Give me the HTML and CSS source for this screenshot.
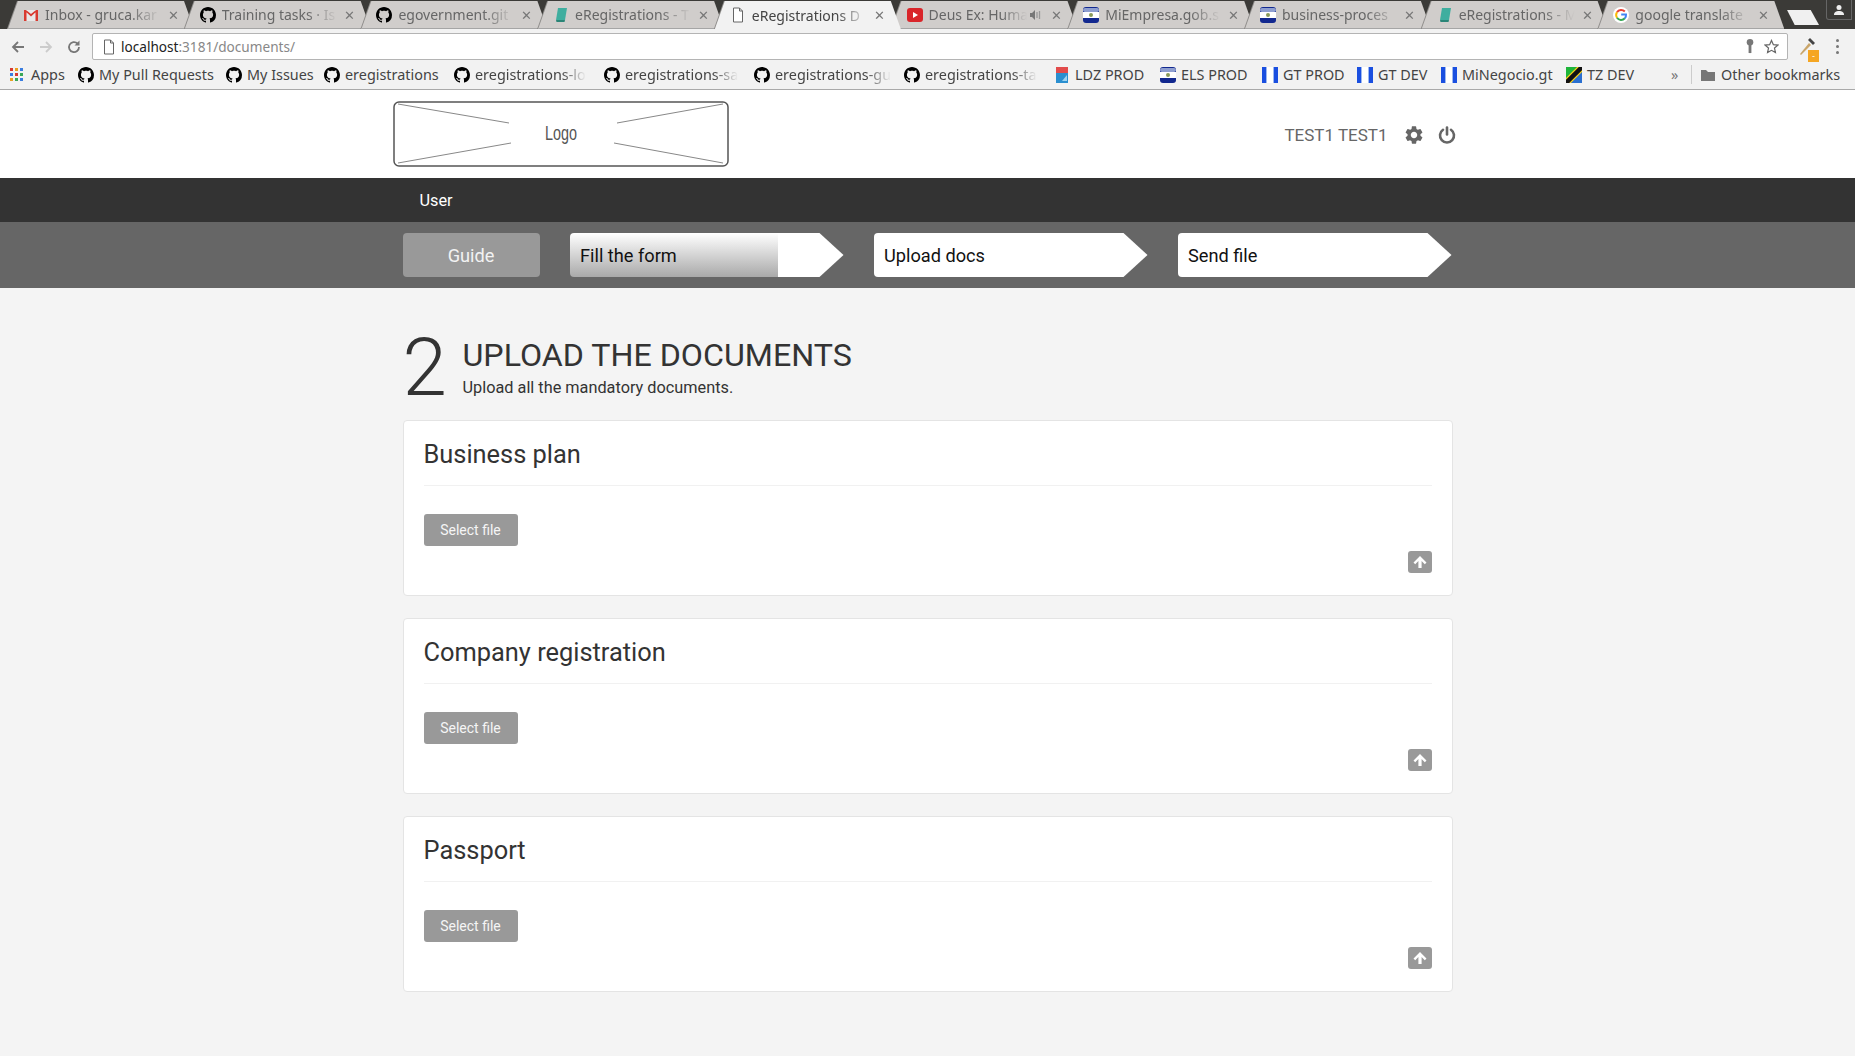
FILE: index.html
```html
<!DOCTYPE html>
<html lang="en-US">
<head>
    <meta charset="utf-8" />
    <title>eRegistrations Documents</title>
    <link rel="stylesheet" href="styles.css">
</head>
<body>

<svg class="defs" width="0" height="0">
    <symbol id="gh" viewBox="0 0 16 16"><path d="M8 0C3.58 0 0 3.58 0 8c0 3.54 2.29 6.53 5.47 7.59.4.07.55-.17.55-.38 0-.19-.01-.82-.01-1.49-2.01.37-2.53-.49-2.69-.94-.09-.23-.48-.94-.82-1.13-.28-.15-.68-.52-.01-.53.63-.01 1.08.58 1.23.82.72 1.21 1.87.87 2.33.66.07-.52.28-.87.51-1.07-1.78-.2-3.64-.89-3.64-3.95 0-.87.31-1.59.82-2.15-.08-.2-.36-1.02.08-2.12 0 0 .67-.21 2.2.82.64-.18 1.32-.27 2-.27.68 0 1.36.09 2 .27 1.53-1.04 2.2-.82 2.2-.82.44 1.1.16 1.92.08 2.12.51.56.82 1.27.82 2.15 0 3.07-1.87 3.75-3.65 3.95.29.25.54.73.54 1.48 0 1.07-.01 1.93-.01 2.2 0 .21.15.46.55.38A8.013 8.013 0 0016 8c0-4.42-3.58-8-8-8z"/></symbol>
    <symbol id="book" viewBox="0 0 16 16"><path fill="#3fae9f" d="M5 1h9l-2 12H3z"/><path fill="#2a8577" d="M3 13h9l-.5 2H3.5z"/></symbol>
    <symbol id="els" viewBox="0 0 16 16"><rect width="16" height="16" rx="3" fill="#12288f"/><rect y="1" width="16" height="4" rx="2" fill="#8f9fd0"/><rect y="5" width="16" height="6" fill="#fff"/><circle cx="8" cy="8" r="2" fill="#8a9a5b"/></symbol>
    <symbol id="gt" viewBox="0 0 16 16"><rect width="16" height="16" fill="#1a4fe0"/><rect x="4" width="8" height="16" fill="#9db8f0"/><rect x="5" width="6" height="16" fill="#fff"/></symbol>
    <symbol id="doc" viewBox="0 0 12 16"><path d="M1.5 1h6l3 3v11h-9z" fill="#fff" stroke="#666" stroke-width="1"/><path d="M7.5 1v3h3" fill="none" stroke="#666"/></symbol>
    <symbol id="up" viewBox="0 0 24 22"><rect width="24" height="22" rx="3" fill="#999"/><path d="M12 5l6.5 6.5-1.7 1.7-3.2-3.1V17h-3.2V10.100l-3.200 3.100-1.700-1.700z" fill="#fff"/></symbol>
</svg>

<div class="tabstrip">
    <div class="tab"><div class="tab-in">
        <svg class="favicon" viewBox="0 0 16 16"><path fill="#e8e8e8" d="M1 3h14v11H1z"/><path fill="#d93a30" d="M1 3h2.500v11H1zM12.500 3H15v11h-2.500zM1 3h2l5 4 5-4h2L8 9.500z"/></svg>
        <span class="tab-title">Inbox - gruca.kar</span><span class="tab-x">✕</span>
    </div></div>
    <div class="tab"><div class="tab-in">
        <svg class="favicon"><use href="#gh"/></svg>
        <span class="tab-title">Training tasks · Is</span><span class="tab-x">✕</span>
    </div></div>
    <div class="tab"><div class="tab-in">
        <svg class="favicon"><use href="#gh"/></svg>
        <span class="tab-title">egovernment.git</span><span class="tab-x">✕</span>
    </div></div>
    <div class="tab"><div class="tab-in">
        <svg class="favicon"><use href="#book"/></svg>
        <span class="tab-title">eRegistrations - T</span><span class="tab-x">✕</span>
    </div></div>
    <div class="tab active"><div class="tab-in">
        <svg class="favicon"><use href="#doc"/></svg>
        <span class="tab-title">eRegistrations D</span><span class="tab-x">✕</span>
    </div></div>
    <div class="tab"><div class="tab-in">
        <svg class="favicon" viewBox="0 0 16 16"><rect y="1" width="16" height="14" rx="3" fill="#d9252a"/><path d="M6 5l5 3-5 3z" fill="#fff"/></svg>
        <span class="tab-title short">Deus Ex: Huma</span>
        <svg class="speaker" viewBox="0 0 12 12"><path d="M1 4h2l3-3v10L3 8H1z" fill="#777"/><path d="M8 3v6M10.500 2v8" stroke="#999" stroke-width="1.300"/></svg>
        <span class="tab-x">✕</span>
    </div></div>
    <div class="tab"><div class="tab-in">
        <svg class="favicon"><use href="#els"/></svg>
        <span class="tab-title">MiEmpresa.gob.s</span><span class="tab-x">✕</span>
    </div></div>
    <div class="tab"><div class="tab-in">
        <svg class="favicon"><use href="#els"/></svg>
        <span class="tab-title">business-proces</span><span class="tab-x">✕</span>
    </div></div>
    <div class="tab"><div class="tab-in">
        <svg class="favicon"><use href="#book"/></svg>
        <span class="tab-title">eRegistrations - M</span><span class="tab-x">✕</span>
    </div></div>
    <div class="tab"><div class="tab-in">
        <svg class="favicon" viewBox="0 0 16 16"><circle cx="8" cy="8" r="8" fill="#fff"/><path d="M11.800 4.500A5 5 0 0 0 4 5.300" fill="none" stroke="#e94235" stroke-width="2"/><path d="M4 5.300a5 5 0 0 0 0 5.400" fill="none" stroke="#fbbc05" stroke-width="2"/><path d="M4 10.700a5 5 0 0 0 7.800.600" fill="none" stroke="#34a853" stroke-width="2"/><path d="M11.800 11.300A5 5 0 0 0 13 7.500H8.200" fill="none" stroke="#4285f4" stroke-width="2"/></svg>
        <span class="tab-title">google translate</span><span class="tab-x">✕</span>
    </div></div>
    <div class="new-tab"></div>
    <div class="profile">
        <svg viewBox="0 0 12 12" width="12" height="12"><circle cx="6" cy="3.500" r="2.500" fill="#eee"/><path d="M1 11c0-3 2-4 5-4s5 1 5 4z" fill="#eee"/></svg>
    </div>
</div>

<div class="toolbar">
    <svg class="nav-icon" viewBox="0 0 16 16"><path d="M14 8H3M8 3L3 8l5 5" fill="none" stroke="#777" stroke-width="1.800"/></svg>
    <svg class="nav-icon" viewBox="0 0 16 16"><path d="M2 8h11M8 3l5 5-5 5" fill="none" stroke="#ccc" stroke-width="1.800"/></svg>
    <svg class="nav-icon" viewBox="0 0 16 16"><path d="M13 8a5 5 0 1 1-1.500-3.500" fill="none" stroke="#777" stroke-width="1.800"/><path d="M13.500 1.500v5h-5z" fill="#777"/></svg>
    <div class="omnibox">
        <svg class="omni-doc"><use href="#doc"/></svg>
        <span class="url">localhost</span><span class="url-rest">:3181/documents/</span>
        <svg class="omni-key" viewBox="0 0 10 16"><circle cx="5" cy="3.500" r="3.500" fill="#777"/><path d="M3.500 5h3v10h-3z" fill="#777"/></svg>
        <svg class="omni-star" viewBox="0 0 16 16"><path d="M8 1.500l2 4.500 4.800.5-3.600 3.200 1 4.800L8 12.100l-4.200 2.400 1-4.800L1.200 6.500 6 6z" fill="none" stroke="#666" stroke-width="1.300"/></svg>
    </div>
    <div class="ext">
        <svg viewBox="0 0 18 18" width="18" height="18"><path d="M2 17L11 6l2 2-10 10z" fill="#c9a56a"/><path d="M10 3l2-2 5 5-2 2z" fill="#444"/></svg>
        <span class="ext-badge">-</span>
    </div>
    <div class="menu-dots"><i></i><i></i><i></i></div>
</div>

<div class="bookmarks">
    <div class="bm bm-apps">
        <svg class="bm-icon" viewBox="0 0 14 14">
            <rect x="0" y="0" width="3" height="3" fill="#d93a30"/><rect x="5" y="0" width="3" height="3" fill="#e8a020"/><rect x="10" y="0" width="3" height="3" fill="#3a7de0"/>
            <rect x="0" y="5" width="3" height="3" fill="#3a7de0"/><rect x="5" y="5" width="3" height="3" fill="#d93a30"/><rect x="10" y="5" width="3" height="3" fill="#3aa757"/>
            <rect x="0" y="10" width="3" height="3" fill="#e8a020"/><rect x="5" y="10" width="3" height="3" fill="#3aa757"/><rect x="10" y="10" width="3" height="3" fill="#3a7de0"/>
        </svg>Apps
    </div>
    <div class="bm bm-pulls"><svg class="bm-icon"><use href="#gh"/></svg>My Pull Requests</div>
    <div class="bm bm-issues"><svg class="bm-icon"><use href="#gh"/></svg>My Issues</div>
    <div class="bm bm-ereg"><svg class="bm-icon"><use href="#gh"/></svg>eregistrations</div>
    <div class="bm bm-cut"><svg class="bm-icon"><use href="#gh"/></svg><span class="bm-fade">eregistrations-lo</span></div>
    <div class="bm bm-cut"><svg class="bm-icon"><use href="#gh"/></svg><span class="bm-fade">eregistrations-sa</span></div>
    <div class="bm bm-cut"><svg class="bm-icon"><use href="#gh"/></svg><span class="bm-fade">eregistrations-gu</span></div>
    <div class="bm bm-cut"><svg class="bm-icon"><use href="#gh"/></svg><span class="bm-fade">eregistrations-ta</span></div>
    <div class="bm bm-ldz">
        <svg class="bm-icon" viewBox="0 0 16 16"><rect x="2" width="12" height="6" fill="#e24b4b"/><rect x="2" y="6" width="12" height="10" fill="#2a8fd0"/><path d="M8 14l5-6v6z" fill="#9fd3ef"/></svg>LDZ PROD
    </div>
    <div class="bm bm-els"><svg class="bm-icon"><use href="#els"/></svg>ELS PROD</div>
    <div class="bm bm-gtp"><svg class="bm-icon"><use href="#gt"/></svg>GT PROD</div>
    <div class="bm bm-gtd"><svg class="bm-icon"><use href="#gt"/></svg>GT DEV</div>
    <div class="bm bm-mi"><svg class="bm-icon"><use href="#gt"/></svg>MiNegocio.gt</div>
    <div class="bm bm-tz">
        <svg class="bm-icon" viewBox="0 0 16 16"><rect width="16" height="16" fill="#1eb53a"/><path d="M16 0v16H0z" fill="#2a6fd0"/><path d="M0 16L16 0" stroke="#fcd116" stroke-width="7"/><path d="M0 16L16 0" stroke="#111" stroke-width="4.500"/></svg>TZ DEV
    </div>
    <div class="bm-more">»</div>
    <div class="bm bm-other">
        <svg class="bm-icon" viewBox="0 0 16 16"><path d="M1 3h5l2 2h7v9H1z" fill="#777"/></svg>Other bookmarks
    </div>
</div>

<div class="site-header">
    <div class="wrap header-row">
        <svg class="logo" viewBox="0 0 336 66" width="336" height="66">
            <rect x="1" y="1" width="334" height="64" rx="5" fill="#fff" stroke="#555" stroke-width="1.500"/>
            <path d="M5 3L116 22M330 3L224 22M5 62L118 42M330 62L221 42" stroke="#888" stroke-width="1"/>
            <text class="logo-text" x="168" y="39" text-anchor="middle" textLength="32" lengthAdjust="spacingAndGlyphs">Logo</text>
        </svg>
        <div class="user-box">
            <span class="user-name">TEST1 TEST1</span>
            <svg class="user-icon" viewBox="2 2 20 20"><path fill="#666" d="M19.140 12.940c.04-.3.06-.61.06-.94 0-.32-.02-.64-.07-.94l2.030-1.580a.49.49 0 00.12-.61l-1.920-3.320a.488.488 0 00-.59-.22l-2.390.96c-.5-.38-1.030-.7-1.620-.94l-.36-2.540a.484.484 0 00-.48-.41h-3.840c-.24 0-.43.17-.47.41l-.36 2.540c-.59.24-1.130.57-1.620.94l-2.390-.96c-.22-.08-.47 0-.59.22L2.740 8.870c-.12.21-.08.47.12.61l2.030 1.580c-.05.3-.09.63-.09.94s.02.64.07.94l-2.030 1.580a.49.49 0 00-.12.61l1.920 3.320c.12.22.37.29.59.22l2.390-.96c.5.38 1.030.7 1.620.94l.36 2.54c.05.24.24.41.48.41h3.840c.24 0 .44-.17.47-.41l.36-2.540c.59-.24 1.130-.56 1.620-.94l2.390.96c.22.08.47 0 .59-.22l1.920-3.320c.12-.22.07-.47-.12-.61l-2.010-1.580zM12 15.600c-1.980 0-3.600-1.620-3.600-3.600s1.620-3.600 3.600-3.600 3.600 1.620 3.600 3.600-1.620 3.600-3.600 3.600z"/></svg>
            <svg class="user-icon" viewBox="0 0 18 18"><path d="M9 1.500v7" stroke="#666" stroke-width="2.600" stroke-linecap="round"/><path d="M5 3.800a7 7 0 1 0 8 0" fill="none" stroke="#666" stroke-width="2.600" stroke-linecap="round"/></svg>
        </div>
    </div>
</div>

<div class="role-bar">
    <div class="wrap"><span class="role">User</span></div>
</div>

<div class="steps-bar">
    <div class="wrap steps">
        <a class="guide">Guide</a>
        <a class="step step-progress">Fill the form</a>
        <a class="step">Upload docs</a>
        <a class="step">Send file</a>
    </div>
</div>

<div class="wrap main">
    <div class="section-title">
        <div class="section-num">2</div>
        <div>
            <h1>UPLOAD THE DOCUMENTS</h1>
            <p>Upload all the mandatory documents.</p>
        </div>
    </div>

    <div class="card">
        <h2>Business plan</h2>
        <button class="select-btn">Select file</button>
        <svg class="upload-icon"><use href="#up"/></svg>
    </div>
    <div class="card">
        <h2>Company registration</h2>
        <button class="select-btn">Select file</button>
        <svg class="upload-icon"><use href="#up"/></svg>
    </div>
    <div class="card">
        <h2>Passport</h2>
        <button class="select-btn">Select file</button>
        <svg class="upload-icon"><use href="#up"/></svg>
    </div>
</div>

</body>
</html>
```

FILE: styles.css
```css
* {box-sizing: border-box;}
html, body {margin: 0; padding: 0;}
body {background-color: #f4f4f4; font-family: Roboto, sans-serif; color: #333; height: 1056px; overflow: hidden;}
.defs {display: block; height: 0;}

/* browser chrome */
.tabstrip {display: flex; height: 29px; padding: 1px 0 0 8px; background-color: #3b3a37; font-family: "Noto Sans", sans-serif; font-size: 14px; color: #666;}
.tab {width: 186px; height: 28px; margin-right: -9.3px; flex: none; filter: drop-shadow(-1px 0 0 #8e8c8a);}
.tab-in {display: flex; align-items: center; height: 100%; padding: 0 14px 0 15px; background-color: #d0cdcb; border-bottom: 1px solid #a5a5a5; clip-path: polygon(0 100%, 10px 0, calc(100% - 10px) 0, 100% 100%);}
.tab.active {position: relative; z-index: 2;}
.tab.active .tab-in {background-color: #f2f2f2; border-bottom: none; color: #444;}
.favicon {width: 16px; height: 16px; flex: none; margin-right: 6px;}
.tab-title {flex: 1; white-space: nowrap; -webkit-mask-image: linear-gradient(to right, #000 72%, transparent 98%); mask-image: linear-gradient(to right, #000 72%, transparent 98%);}
.speaker {width: 12px; height: 12px; flex: none; margin-right: 6px;}
.tab-x {width: 14px; flex: none; margin-left: 3px; font-size: 13px; color: #777; text-align: center;}
.new-tab {width: 32px; height: 15px; margin: 9px 0 0 12px; background-color: #f0f0f0; clip-path: polygon(0 0, 74% 0, 100% 100%, 24% 100%); flex: none;}
.profile {display: flex; align-items: center; justify-content: center; width: 26px; height: 20px; margin: -1px 0 0 7px; border: 1px solid #666; border-top: none; border-radius: 0 0 0 3px; flex: none;}

.toolbar {display: flex; align-items: center; height: 31px; padding: 4px 0 0 10px; background-color: #f2f2f2;}
.nav-icon {width: 16px; height: 16px; margin-right: 12px; flex: none;}
.omnibox {display: flex; align-items: center; width: 1696px; height: 27px; margin-left: -2px; padding: 0 8px 0 10px; background-color: #fff; border: 1px solid #b4b4b4; border-radius: 2px; font-family: "Noto Sans", sans-serif; font-size: 13.6px;}
.omni-doc {width: 12px; height: 16px; margin-right: 6px;}
.url {color: #222;}
.url-rest {flex: 1; color: #888;}
.omni-key {width: 10px; height: 15px; margin-right: 9px;}
.omni-star {width: 15px; height: 15px;}
.ext {position: relative; width: 20px; height: 20px; margin-left: 10px;}
.ext-badge {position: absolute; right: -1px; bottom: -5px; width: 11px; height: 12px; background-color: #f5a623; color: #fff; font-size: 9px; line-height: 12px; text-align: center;}
.menu-dots {display: flex; flex-direction: column; gap: 3px; margin-left: 18px;}
.menu-dots i {display: block; width: 3px; height: 3px; border-radius: 50%; background-color: #777;}

.bookmarks {display: flex; align-items: center; height: 30px; padding-left: 10px; background-color: #f2f2f2; border-bottom: 1px solid #a9a9a9; font-family: "Noto Sans", sans-serif; font-size: 14.4px; color: #444;}
.bm {display: flex; align-items: center; flex: none; white-space: nowrap;}
.bm-icon {width: 16px; height: 16px; margin-right: 5px; flex: none;}
.bm-apps {width: 68px;}
.bm-apps .bm-icon {width: 14px; height: 14px; margin-right: 7px;}
.bm-pulls {width: 148px;}
.bm-issues {width: 98px;}
.bm-ereg {width: 130px;}
.bm-cut {width: 150px;}
.bm-fade {display: block; -webkit-mask-image: linear-gradient(to right, #000 78%, transparent 100%); mask-image: linear-gradient(to right, #000 78%, transparent 100%);}
.bm-ldz {width: 106px;}
.bm-els {width: 102px;}
.bm-gtp {width: 95px;}
.bm-gtd {width: 84px;}
.bm-mi {width: 125px;}
.bm-tz {width: 104px;}
.bm-more {width: 20px; margin-left: 1px; color: #777;}
.bm-other {padding-left: 8px; border-left: 1px solid #ccc;}

/* page */
.wrap {width: 1050px; margin: 0 auto;}
.site-header {height: 88px; background-color: #fff;}
.header-row {display: flex; align-items: center; justify-content: space-between; height: 100%;}
.logo {margin-left: -10px; margin-top: -1px;}
.logo-text {font-family: "Liberation Sans", sans-serif; font-size: 20px; fill: #555;}
.user-box {display: flex; align-items: center; margin: 1px -3px 0 0;}
.user-name {margin-right: 17px; font-size: 17px; color: #666;}
.user-icon {width: 18px; height: 18px; margin-right: 15px;}
.user-icon:last-child {margin-right: 0;}

.role-bar {height: 44px; background-color: #333;}
.role-bar .wrap {display: flex; align-items: center; height: 100%; padding-left: 17px;}
.role {font-size: 16.3px; color: #fff;}

.steps-bar {height: 66px; background-color: #666;}
.steps {display: flex; align-items: center; height: 100%;}
.guide {display: flex; align-items: center; justify-content: center; width: 137px; height: 44px; margin-right: 30px; background-color: #999; border-radius: 4px; font-size: 18.2px; color: #f2f2f2;}
.step {display: flex; align-items: center; width: 274px; height: 44px; margin-right: 30px; padding-left: 10.5px; background-color: #fff; border-radius: 4px 0 0 4px; clip-path: polygon(0 0, calc(100% - 24px) 0, 100% 50%, calc(100% - 24px) 100%, 0 100%); font-size: 18.2px; color: #111;}
.step:last-child {margin-right: 0;}
.step-progress {background-image: linear-gradient(to bottom, #fff 0%, #a9a9a9 100%); background-repeat: no-repeat; background-size: 208px 100%;}

.main {padding-top: 40px;}
.section-title {display: flex; align-items: flex-start; height: 92px;}
.section-num {width: 60px; font-size: 80px; font-weight: 300; line-height: 80px; color: #333;}
h1 {margin: 9px 0 0; font-size: 32.2px; font-weight: 400; line-height: 36px; color: #333;}
.section-title p {margin: 4.5px 0 0; font-size: 16.3px; line-height: 20px; color: #333;}

.card {display: flow-root; position: relative; height: 176px; margin-bottom: 22px; padding: 0 20px; background-color: #fff; border: 1px solid #e4e4e4; border-radius: 4px;}
h2 {margin: 0; padding: 14.5px 0 13.5px; border-bottom: 1px solid #f1f1f1; font-size: 25.4px; font-weight: 400; line-height: 36px; color: #333;}
.select-btn {display: block; width: 94px; height: 32px; margin-top: 28px; padding: 0; background-color: #999; border: none; border-radius: 3px; font-family: Roboto, sans-serif; font-size: 14px; color: #f5f5f5;}
.upload-icon {display: block; width: 24px; height: 22px; margin: 5px 0 0 auto;}
```
